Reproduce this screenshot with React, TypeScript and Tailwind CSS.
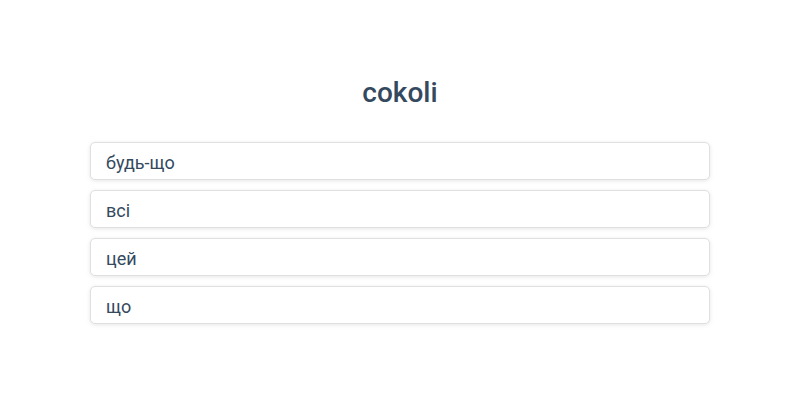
import React from 'react';

const options = ['будь-що', 'всі', 'цей', 'що'];

const App: React.FC = () => {
  return (
    <div className="min-h-screen bg-white font-['Roboto',sans-serif] text-[#34495e]">
      <div className="mx-auto w-[620px] pt-[74px]">
        <h1 className="text-center text-[28px] font-medium leading-[38px]">cokoli</h1>
        <div className="mt-[30px] flex flex-col gap-[10px]">
          {options.map(o => (
            <div
              key={o}
              className="h-[38px] overflow-hidden rounded-[5px] border border-[#e0e0e0] bg-white px-[15px] text-[18px] leading-[39px] shadow-[0_1px_4px_rgba(0,0,0,0.1)]"
            >
              {o}
            </div>
          ))}
        </div>
      </div>
    </div>
  );
};

export default App;
